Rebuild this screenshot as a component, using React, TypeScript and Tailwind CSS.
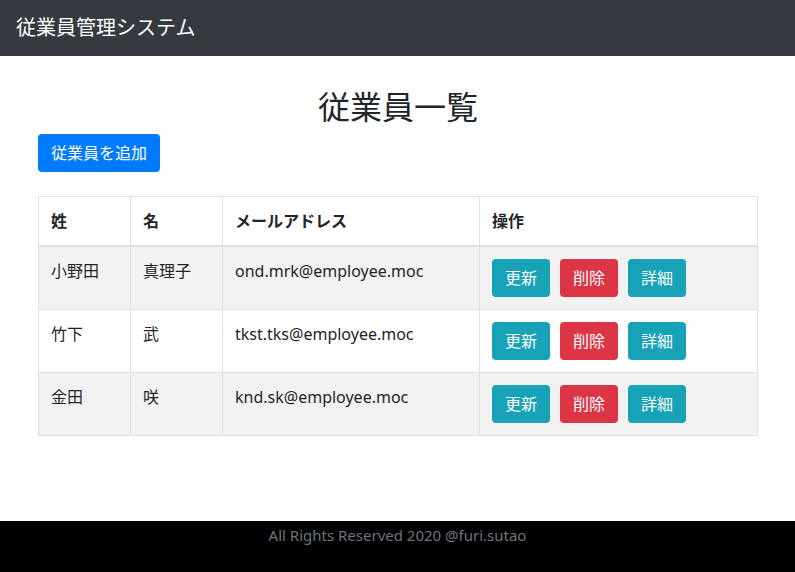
const employees = [
  { last: "小野田", first: "真理子", email: "ond.mrk@employee.moc" },
  { last: "竹下", first: "武", email: "tkst.tks@employee.moc" },
  { last: "金田", first: "咲", email: "knd.sk@employee.moc" },
];

function ActionButton({ label, color }: { label: string; color: string }) {
  return (
    <button
      className={`h-[38px] w-[58px] rounded text-white text-base leading-6 ${color}`}
    >
      {label}
    </button>
  );
}

export default function App() {
  return (
    <div
      className="min-h-screen flex flex-col bg-white text-[#212529]"
      style={{ fontFamily: '"Noto Sans", "Noto Sans CJK JP", sans-serif' }}
    >
      <nav className="h-14 bg-[#343a40] flex items-center px-4">
        <span className="text-white text-xl leading-[30px]">従業員管理システム</span>
      </nav>

      <main className="flex-1">
        <div className="w-[720px] ml-[38px] pt-8">
          <h2 className="text-center text-[32px] leading-[38px] mb-2 font-normal">
            従業員一覧
          </h2>
          <button className="h-[38px] w-[122px] rounded bg-[#007bff] text-white text-base leading-6">
            従業員を追加
          </button>

          <table className="mt-6 w-[720px] border-collapse border border-[#dee2e6] text-base">
            <thead>
              <tr className="h-[49px]">
                <th className="w-[92px] text-left font-bold px-3 border border-[#dee2e6] border-b-2">姓</th>
                <th className="w-[92px] text-left font-bold px-3 border border-[#dee2e6] border-b-2">名</th>
                <th className="w-[257px] text-left font-bold px-3 border border-[#dee2e6] border-b-2">メールアドレス</th>
                <th className="text-left font-bold px-3 border border-[#dee2e6] border-b-2">操作</th>
              </tr>
            </thead>
            <tbody>
              {employees.map((e, i) => (
                <tr key={e.email} className={i % 2 === 0 ? "bg-[#f2f2f2]" : "bg-white"}>
                  <td className="[vertical-align:top] p-3 leading-6 border border-[#dee2e6]">{e.last}</td>
                  <td className="[vertical-align:top] p-3 leading-6 border border-[#dee2e6]">{e.first}</td>
                  <td className="[vertical-align:top] p-3 leading-6 border border-[#dee2e6]">{e.email}</td>
                  <td className="[vertical-align:top] p-3 border border-[#dee2e6]">
                    <div className="flex gap-[10px]">
                      <ActionButton label="更新" color="bg-[#17a2b8]" />
                      <ActionButton label="削除" color="bg-[#dc3545]" />
                      <ActionButton label="詳細" color="bg-[#17a2b8]" />
                    </div>
                  </td>
                </tr>
              ))}
            </tbody>
          </table>
        </div>
      </main>

      <footer className="h-[51px] bg-black text-center text-[#6c757d] text-[15px] leading-6 pt-[2px]">
        All Rights Reserved 2020 @furi.sutao
      </footer>
    </div>
  );
}
